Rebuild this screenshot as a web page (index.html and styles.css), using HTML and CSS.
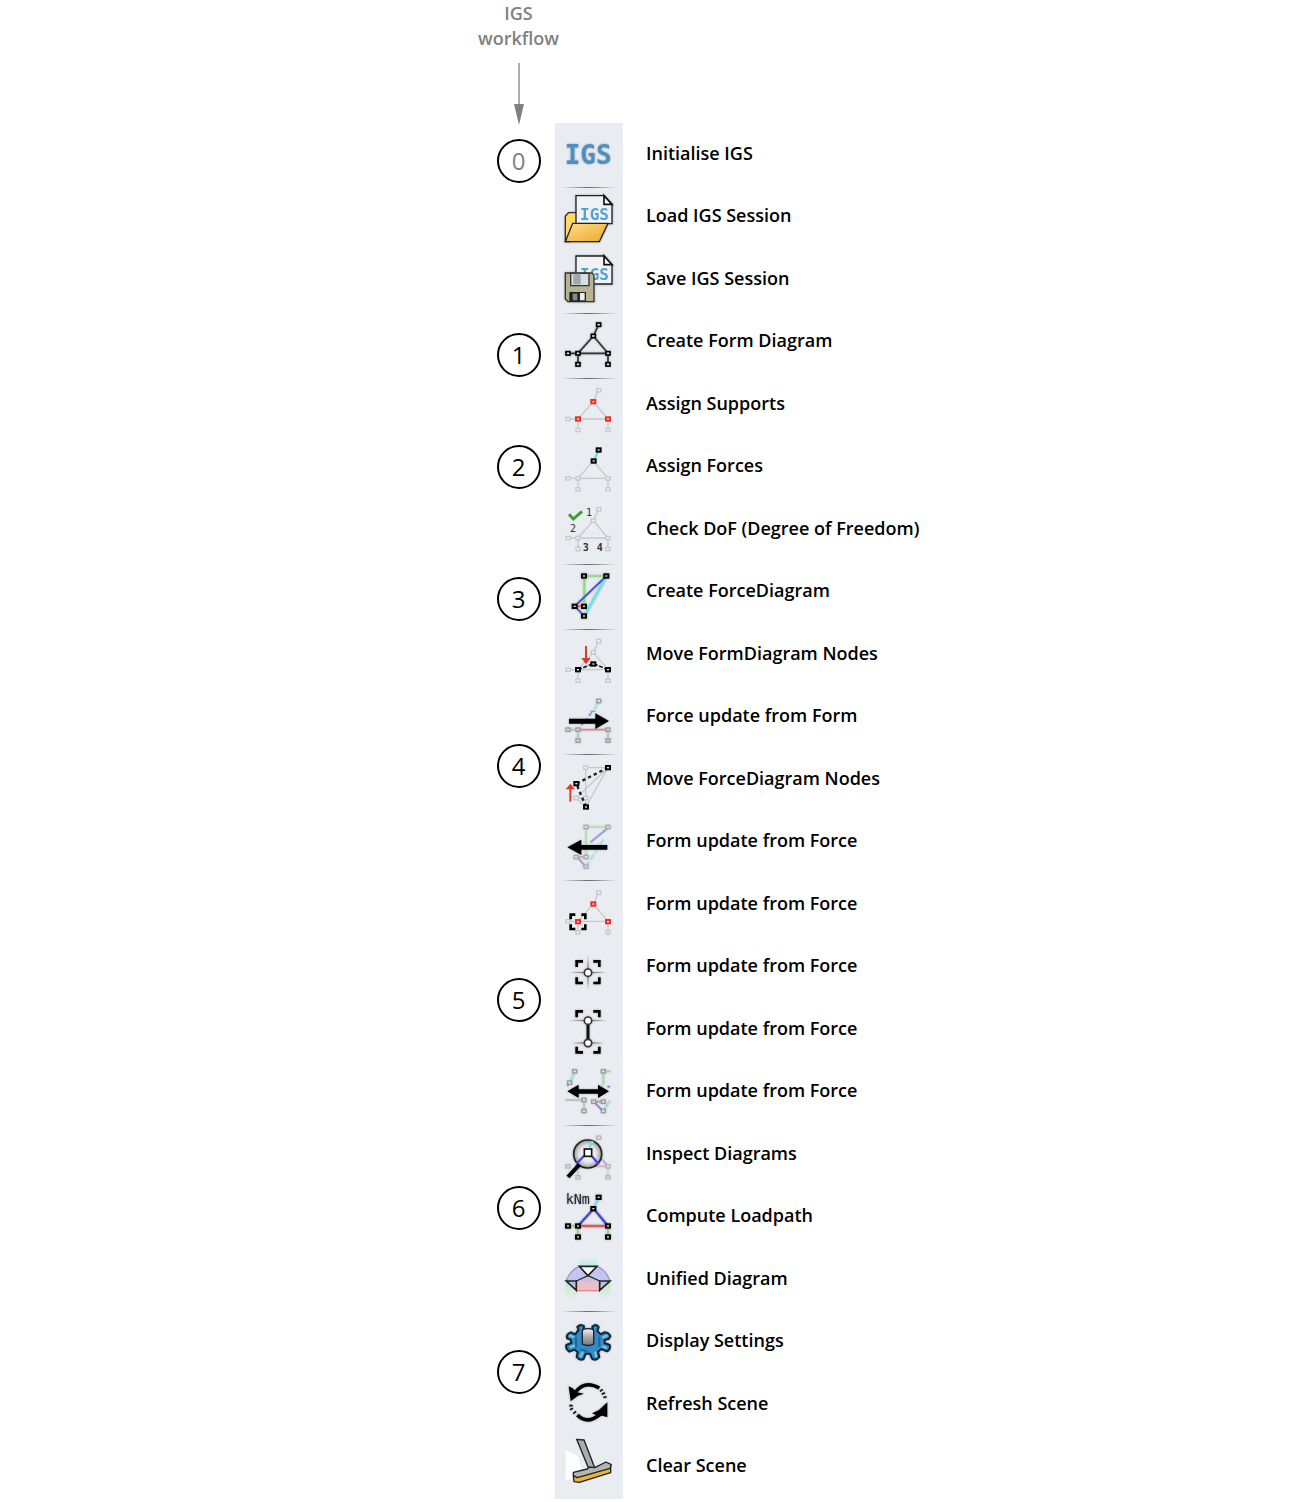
FILE: index.html
```html
<!DOCTYPE html>
<html lang="en">
<head>
<meta charset="utf-8">
<meta name="viewport" content="width=device-width, initial-scale=1">
<title>IGS workflow</title>
<link rel="stylesheet" href="styles.css">
</head>
<body>
<svg class="defs" width="0" height="0" aria-hidden="true">
  <defs>
    <rect id="node" x="-6" y="-5" width="12" height="10"/>
    <path id="frame" d="M146 50L130 84L84 136M130 84L174 136M54 136H174M84 136V169M174 136V169"/>
    <g id="frame-nodes">
      <use href="#node" x="146" y="50"/><use href="#node" x="130" y="84"/><use href="#node" x="84" y="136"/><use href="#node" x="54" y="136"/><use href="#node" x="174" y="136"/><use href="#node" x="84" y="169"/><use href="#node" x="174" y="169"/>
    </g>
    <g id="page">
      <path d="M78 48H162L186 74V132H78Z" fill="#f1f2f4" stroke="#222" stroke-width="4"/>
      <path d="M162 48V74H186Z" fill="#fff" stroke="#111" stroke-width="5"/>
      <text x="90" y="121" class="mono" font-size="48" fill="#4da3d6">IGS</text>
    </g>
    <linearGradient id="folder" x1="0" y1="0" x2="1" y2="1"><stop offset="0" stop-color="#ffe08a"/><stop offset="1" stop-color="#eda52c"/></linearGradient>
    <linearGradient id="shaft" x2="0" y2="1"><stop offset="0" stop-color="#f4f4f4"/><stop offset=".5" stop-color="#aaa"/><stop offset="1" stop-color="#777"/></linearGradient>
    <radialGradient id="lens"><stop offset="0" stop-color="#fff"/><stop offset=".6" stop-color="#e6e6e6"/><stop offset="1" stop-color="#999"/></radialGradient>
    <radialGradient id="glow"><stop offset="0" stop-color="#555"/><stop offset="1" stop-color="#555" stop-opacity="0"/></radialGradient>
    <linearGradient id="cyan-fade" x2="0" y2="1"><stop offset="0" stop-color="#b9eef0" stop-opacity="0"/><stop offset="1" stop-color="#a8ebee"/></linearGradient>
    <linearGradient id="green-fade" x2="0" y2="1"><stop offset="0" stop-color="#b5efb5"/><stop offset="1" stop-color="#b5efb5" stop-opacity="0"/></linearGradient>
  </defs>
</svg>

<main class="figure">
  <section class="workflow">
    <h1 class="title">IGS<br>workflow</h1>
    <svg class="arrow" viewBox="0 0 12 62" aria-hidden="true"><path d="M6 0V42" stroke="#808080" stroke-width="1.3"/><path d="M1 41H11L6 62Z" fill="#808080"/></svg>
    <ol class="steps">
      <li class="step step-start">0</li>
      <li class="step step-form">1</li>
      <li class="step step-assign">2</li>
      <li class="step step-force">3</li>
      <li class="step step-move">4</li>
      <li class="step step-constrain">5</li>
      <li class="step step-inspect">6</li>
      <li class="step step-scene">7</li>
    </ol>
  </section>

  <div class="toolbar" role="toolbar" aria-label="IGS tools">
    <button class="tool" aria-label="Initialise IGS"><svg viewBox="255 375 204 180"><text x="284" y="492" class="mono" font-size="78" fill="#4a90c0">IGS</text></svg></button>
    <span class="rule"></span>
    <button class="tool" aria-label="Load IGS Session"><svg viewBox="15 31 204 180">
      <path d="M46 186V110L56 99H80V140L60 186Z" fill="#ffd966" stroke="#333" stroke-width="4"/>
      <use href="#page"/>
      <path d="M68 131H174L148 186H46Z" fill="url(#folder)" stroke="#222" stroke-width="4"/></svg></button>
    <button class="tool" aria-label="Save IGS Session"><svg viewBox="15 211 204 180">
      <use href="#page" y="181"/>
      <path d="M46 280H126L132 286V366H54L46 358Z" fill="#b9b490" stroke="#333" stroke-width="4"/>
      <path d="M62 281H117V318H62Z" fill="#d9dce0" stroke="#333" stroke-width="4"/><path d="M70 282H92V314H70Z" fill="#9fa7b0"/>
      <path d="M58 337H108V366H58Z" fill="#222"/><path d="M68 342H82V362H68Z" fill="#888"/><path d="M90 340H104V362H90Z" fill="#eee"/></svg></button>
    <span class="rule"></span>
    <button class="tool" aria-label="Create Form Diagram"><svg viewBox="15 24 204 180" class="dark"><use href="#frame"/><g class="nodes"><use href="#frame-nodes"/></g></svg></button>
    <span class="rule"></span>
    <button class="tool" aria-label="Assign Supports"><svg viewBox="15 220 204 180" class="faint"><use href="#frame" y="198"/><g class="nodes"><use href="#frame-nodes" y="198"/></g>
      <g class="nodes red"><use href="#node" x="130" y="282"/><use href="#node" x="84" y="334"/><use href="#node" x="174" y="334"/></g></svg></button>
    <button class="tool" aria-label="Assign Forces"><svg viewBox="15 16 204 180" class="faint"><use href="#frame" y="-8"/><g class="nodes"><use href="#frame-nodes" y="-8"/></g>
      <path d="M144 48L133 72" class="cyan wide"/><g class="nodes black"><use href="#node" x="146" y="43"/><use href="#node" x="131" y="76"/></g></svg></button>
    <button class="tool" aria-label="Check DoF (Degree of Freedom)"><svg viewBox="15 196 204 180" class="faint"><use href="#frame" y="171"/><g class="nodes"><use href="#frame-nodes" y="171"/></g>
      <path d="M57 236L70 250L96 227" class="check"/>
      <g class="mono" font-size="30" fill="#333" stroke="none"><text x="108" y="242" class="thin">1</text><text x="60" y="290" class="thin">2</text><text x="98" y="345">3</text><text x="140" y="345">4</text></g></svg></button>
    <span class="rule"></span>
    <button class="tool" aria-label="Create ForceDiagram"><svg viewBox="15 20 204 180" class="color">
      <path d="M169 47H103V138" class="green"/><path d="M168 50L105 164" class="cyan wide"/><path d="M168 48L74 138L102 166" class="blue"/><path d="M76 138H100" class="redline"/>
      <g class="nodes black"><use href="#node" x="102" y="47"/><use href="#node" x="169" y="47"/><use href="#node" x="74" y="138"/><use href="#node" x="102" y="138"/><use href="#node" x="102" y="167"/></g></svg></button>
    <span class="rule"></span>
    <button class="tool" aria-label="Move FormDiagram Nodes"><svg viewBox="15 217 204 180" class="faint"><use href="#frame" y="194"/><g class="nodes"><use href="#frame-nodes" y="194"/></g>
      <path d="M84 330L130 312L174 330" stroke="#222" stroke-width="5" stroke-dasharray="12 5"/><path d="M108 259V300" stroke="#dc3b32" stroke-width="6"/><path d="M94 295H122L108 314Z" fill="#dc3b32" stroke="none"/>
      <g class="nodes black"><use href="#node" x="84" y="330"/><use href="#node" x="130" y="313"/><use href="#node" x="174" y="330"/></g></svg></button>
    <button class="tool" aria-label="Force update from Form"><svg viewBox="15 7 204 180" class="color">
      <g opacity=".6"><path d="M90 120H168" class="redline"/><path d="M58 120H84V152M174 120V152" class="green"/><path d="M122 72L90 112" class="blue" stroke-dasharray="8 10"/><path d="M144 38L132 62" class="cyan" stroke-dasharray="9 4"/>
      <g class="nodes gray"><use href="#node" x="146" y="34"/><use href="#node" x="54" y="120"/><use href="#node" x="84" y="120"/><use href="#node" x="174" y="120"/><use href="#node" x="84" y="153"/><use href="#node" x="174" y="153"/></g><path d="M124 74V65H136" stroke="#777" stroke-width="4"/></g>
      <path d="M57 87H136V71L177 94L136 118V102H57Z" fill="#000"/></svg></button>
    <span class="rule"></span>
    <button class="tool" aria-label="Move ForceDiagram Nodes"><svg viewBox="15 203 204 180" class="faint">
      <path d="M174 232H107V350L174 232L78 323L107 350M78 323H107"/><g class="nodes"><use href="#node" x="107" y="232"/><use href="#node" x="78" y="323"/><use href="#node" x="107" y="323"/></g>
      <path d="M174 232L79 280L108 350" stroke="#222" stroke-width="7" stroke-dasharray="10 9"/><path d="M61 334V294" stroke="#dc3b32" stroke-width="6"/><path d="M47 297H75L61 280Z" fill="#dc3b32" stroke="none"/>
      <g class="nodes black"><use href="#node" x="174" y="232"/><use href="#node" x="79" y="280"/><use href="#node" x="108" y="350"/></g></svg></button>
    <button class="tool" aria-label="Form update from Force"><svg viewBox="15 -1 204 180" class="color">
      <g opacity=".45"><path d="M174 26H108V116" class="green"/><path d="M170 32L121 72M82 116L106 144" class="blue"/><path d="M160 64L110 142" class="cyan" stroke-dasharray="20 6"/><path d="M82 116H102" class="redline"/>
      <g class="nodes gray"><use href="#node" x="108" y="26"/><use href="#node" x="174" y="26"/><use href="#node" x="78" y="116"/><use href="#node" x="108" y="116"/><use href="#node" x="108" y="145"/></g></g>
      <path d="M172 80H94V64L52 87L94 110V94H172Z" fill="#000"/></svg></button>
    <span class="rule"></span>
    <button class="tool" aria-label="Constrain supports"><svg viewBox="15 195 204 180" class="faint"><use href="#frame" y="174"/><g class="nodes"><use href="#frame-nodes" y="174"/></g>
      <path d="M62 304V290H76M94 290H106V304M62 319V333H76M94 333H106V319" class="bracket"/>
      <g class="nodes red"><use href="#node" x="130" y="258"/><use href="#node" x="84" y="311"/><use href="#node" x="174" y="311"/></g></svg></button>
    <button class="tool" aria-label="Constrain vertex"><svg viewBox="15 9 204 180">
      <ellipse cx="114" cy="98" rx="60" ry="3" fill="url(#glow)"/><ellipse cx="114" cy="98" rx="3" ry="62" fill="url(#glow)"/>
      <path d="M80 81V64H99M130 64H148V81M80 112V129H99M130 129H148V112" class="bracket"/><circle cx="114" cy="98" r="11" class="joint"/></svg></button>
    <button class="tool" aria-label="Constrain edge"><svg viewBox="15 189 204 180">
      <ellipse cx="114" cy="242" rx="60" ry="3" fill="url(#glow)"/><ellipse cx="114" cy="309" rx="60" ry="3" fill="url(#glow)"/>
      <path d="M114 242V309" stroke="#111" stroke-width="9"/><path d="M80 232V214H99M130 214H148V232M80 320V337H99M130 337H148V320" class="bracket"/><circle cx="114" cy="242" r="11" class="joint"/><circle cx="114" cy="309" r="11" class="joint"/></svg></button>
    <button class="tool" aria-label="Update both diagrams"><svg viewBox="15 9 204 180" class="color">
      <g opacity=".6"><path d="M182 34H160V76M102 120V152" class="green"/><path d="M72 40L62 64M180 122L162 150" class="cyan"/><path d="M60 68L52 78M132 126L158 152M172 80H180" class="blue"/><path d="M132 125H160" class="redline"/><path d="M46 120H102" stroke="#777" stroke-width="3"/>
      <g class="nodes gray"><use href="#node" x="74" y="34"/><use href="#node" x="160" y="34"/><use href="#node" x="59" y="68"/><use href="#node" x="102" y="120"/><use href="#node" x="102" y="153"/><use href="#node" x="131" y="125"/><use href="#node" x="160" y="125"/><use href="#node" x="160" y="153"/></g></g>
      <path d="M52 94L86 74V88H144V74L177 94L144 114V101H86V114Z" fill="#000"/></svg></button>
    <span class="rule"></span>
    <button class="tool" aria-label="Inspect Diagrams"><svg viewBox="15 206 204 180" class="color">
      <g opacity=".35"><path d="M130 318H174" class="redline"/><path d="M84 318V350M174 318V350" class="green"/><path d="M150 290L174 318" class="blue"/><g class="nodes gray"><use href="#frame-nodes" y="182"/></g></g>
      <circle cx="113" cy="281" r="42" fill="url(#lens)" stroke="#222"/>
      <path d="M118 262L128 242" class="cyan wide"/><path d="M102 286L80 310M126 288L146 312" class="blue wide"/>
      <rect x="103" y="266" width="22" height="22" fill="#fff" stroke="#111"/><path d="M88 313L54 350" class="handle"/></svg></button>
    <button class="tool" aria-label="Compute Loadpath"><svg viewBox="15 14 204 180" class="color">
      <text x="47" y="58" class="mono thin" font-size="40" fill="#222">kNm</text>
      <path d="M84 125H174" class="redline wide"/><path d="M84 125L131 73L174 125" class="blue wide"/><path d="M54 125H84V158M174 125V158" class="green"/><path d="M146 40L131 73" class="cyan"/>
      <g class="nodes black"><use href="#frame-nodes" y="-11"/></g></svg></button>
    <button class="tool" aria-label="Unified Diagram"><svg viewBox="15 194 204 180" class="flat">
      <path d="M88 220H141V247H88Z" fill="url(#cyan-fade)"/><path d="M47 290H81V342H47ZM148 290H182V342H148Z" fill="url(#green-fade)"/>
      <path d="M48 289Q64 254 88 246H141Q166 254 180 289Z" fill="#c3c6ec"/><path d="M79 290H149V319H79Z" fill="#ecc0c6"/><path d="M79 290L114 274L149 290L114 296Z" fill="#cdbfe2"/>
      <path d="M48 289Q64 254 88 246M180 289Q166 254 141 246" stroke="#8f94de" stroke-width="4" fill="none"/><path d="M80 319H149" stroke="#e88" stroke-width="4"/>
      <g stroke="#222" stroke-width="5"><path d="M88 246H141L114 274Z" fill="#fff"/><path d="M49 290H79V318ZM180 290H149V318Z" fill="#b9bdea"/><path d="M79 290L114 274L149 290" fill="none" stroke-width="4"/></g></svg></button>
    <span class="rule"></span>
    <button class="tool" aria-label="Display Settings"><svg viewBox="15 27 204 180">
      <path d="M86 74L82 66Q92 55 102 64L100 76Q114 72 128 76L127 65Q138 55 146 66L142 78L152 88L163 82Q178 84 181 94L176 102L164 104V114L179 120Q183 132 171 139L154 132L144 140L148 156Q138 169 126 161L120 146H107L101 162Q89 168 80 156L83 141L74 134L58 140Q46 132 49 120L64 114L62 104L52 101Q46 88 63 82L76 88Z" fill="#3389c6" stroke="#102433" stroke-width="6" stroke-linejoin="round"/>
      <path d="M60 92L70 96M62 126L74 122M92 154L98 142M136 142L138 154M158 125L168 128M160 97L170 92" stroke="#6fc8dc" stroke-width="7" stroke-linecap="round"/>
      <path d="M78 98V126M148 98V122M94 134L110 138" stroke="#1b66a5" stroke-width="6" stroke-linecap="round"/>
      <path d="M97 78Q97 71 114 71Q131 71 131 78V117Q114 126 97 117Z" fill="url(#shaft)" stroke="#123" stroke-width="4"/></svg></button>
    <button class="tool" aria-label="Refresh Scene"><svg viewBox="15 207 204 180">
      <path d="M76 262Q104 224 148 249" fill="none" stroke="#000" stroke-width="10"/><path d="M56 244L68 250L80 262L102 266L84 272L62 289Z"/>
      <path d="M82 330Q112 360 150 328" fill="none" stroke="#000" stroke-width="11"/><path d="M172 292V337L158 332L146 334L126 325L146 316Z"/>
      <path d="M150 259L158 253M155 268L165 263M160 277L170 276M58 302H68M60 314L69 310M70 326L78 319" stroke="#111" stroke-width="5"/></svg></button>
    <button class="tool" aria-label="Clear Scene"><svg viewBox="15 27 204 180" class="flat">
      <path d="M47 74L84 93L94 130L70 144L68 166L47 162Z" fill="#fff"/>
      <path d="M80 43L102 45L134 128L117 133Z" fill="#a9adb0" stroke="#222" stroke-width="4"/>
      <path d="M70 154L182 124V143L88 172L72 170Z" fill="#eeb23a" stroke="#222" stroke-width="4" stroke-linejoin="round"/>
      <path d="M70 142L112 132L118 126L134 128L168 111L184 119L180 130L82 158L70 152Z" fill="#b4b6b6" stroke="#222" stroke-width="4" stroke-linejoin="round"/></svg></button>
  </div>

  <ul class="labels">
    <li>Initialise IGS</li>
    <li>Load IGS Session</li>
    <li>Save IGS Session</li>
    <li>Create Form Diagram</li>
    <li>Assign Supports</li>
    <li>Assign Forces</li>
    <li>Check DoF (Degree of Freedom)</li>
    <li>Create ForceDiagram</li>
    <li>Move FormDiagram Nodes</li>
    <li>Force update from Form</li>
    <li>Move ForceDiagram Nodes</li>
    <li>Form update from Force</li>
    <li>Form update from Force</li>
    <li>Form update from Force</li>
    <li>Form update from Force</li>
    <li>Form update from Force</li>
    <li>Inspect Diagrams</li>
    <li>Compute Loadpath</li>
    <li>Unified Diagram</li>
    <li>Display Settings</li>
    <li>Refresh Scene</li>
    <li>Clear Scene</li>
  </ul>
</main>
</body>
</html>
```
FILE: styles.css
```css
* {
  box-sizing: border-box;
}

body {
  margin: 0;
  background: #fff;
  color: #000;
  font-family: "Open Sans", "Noto Sans", sans-serif;
}

ol,
ul {
  margin: 0;
  padding: 0;
  list-style: none;
}

.defs {
  position: absolute;
}

.figure {
  display: grid;
  grid-template-columns: 37fr 68px 45fr;
  align-items: stretch;
}

/* Workflow steps */
.workflow {
  display: flex;
  flex-direction: column;
  align-items: center;
  justify-self: end;
  width: 73px;
  padding-top: 1px;
}

.title {
  margin: 0;
  color: #808080;
  font-size: 18px;
  font-weight: 600;
  line-height: 25px;
  text-align: center;
}

.arrow {
  flex: none;
  width: 12px;
  height: 62px;
  margin-top: 12px;
}

.steps {
  padding-top: 14px;
}

.step {
  display: flex;
  align-items: center;
  justify-content: center;
  width: 44px;
  height: 44px;
  border: 2px solid #000;
  border-radius: 50%;
  font-size: 24px;
  line-height: 32px;
}

.step-start { color: #808080; }
.step-form { margin-top: 150px; }
.step-assign { margin-top: 68px; }
.step-force { margin-top: 88px; }
.step-move { margin-top: 123px; }
.step-constrain { margin-top: 190px; }
.step-inspect { margin-top: 164px; }
.step-scene { margin-top: 120px; }

/* Toolbar */
.toolbar {
  display: flex;
  flex-direction: column;
  margin-top: 123px;
  padding: 2px 0 5px;
  background: #e9ecf1;
}

.tool {
  flex: none;
  height: 60px;
  padding: 0;
  border: 0;
  background: none;
  cursor: pointer;
}

.tool svg {
  display: block;
  width: 68px;
  height: 60px;
  filter: drop-shadow(0 0 1px rgba(0, 0, 0, 0.3));
}

.tool .faint,
.tool .flat {
  filter: none;
}

.rule {
  flex: 1;
  margin: 0 6px;
  background: linear-gradient(90deg, transparent, #666 50%, transparent) center / 100% 1px no-repeat;
}

/* Labels */
.labels {
  margin-top: 122px;
  padding: 0 0 2px 23px;
  font-size: 18px;
  font-weight: 600;
}

.labels li {
  height: 62px;
  line-height: 62px;
  white-space: nowrap;
}

.labels li:nth-child(even) {
  height: 63px;
}

/* Icon parts */
.mono {
  font-family: "DejaVu Sans Mono", monospace;
  font-weight: 700;
}

.thin { font-weight: 400; }

.dark,
.faint,
.color {
  fill: none;
  stroke-width: 5px;
}

.color text { stroke: none; }

.dark { stroke: #333; }
.faint { stroke: #c6c8ca; stroke-width: 4px; }

.nodes {
  fill: #eef0f3;
  stroke-width: 4px;
}

.dark .nodes { stroke: #000; stroke-width: 5px; }
.black { stroke: #000; stroke-width: 6px; }
.red { stroke: #ee2e28; stroke-width: 6px; }
.gray { stroke: #777; }

.green { stroke: #7de36b; }
.cyan { stroke: #5fe6ee; }
.blue { stroke: #4247e0; }
.redline { stroke: #e5534f; }
.wide { stroke-width: 7px; }

.check {
  stroke: #3f9d2f;
  stroke-width: 9px;
}

.handle {
  stroke: #000;
  stroke-width: 12px;
}

.bracket {
  fill: none;
  stroke: #000;
  stroke-width: 8px;
}

.joint {
  fill: #fff;
  stroke: #333;
  stroke-width: 5px;
}
```
